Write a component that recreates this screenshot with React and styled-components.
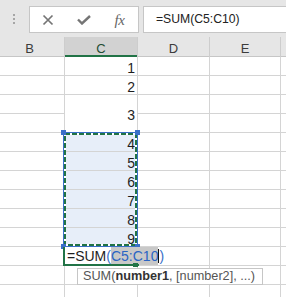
import React from 'react';
import styled, { createGlobalStyle } from 'styled-components';

const GlobalStyle = createGlobalStyle`
  html, body {
    margin: 0;
    padding: 0;
    background: #ffffff;
  }
  body {
    font-family: 'Liberation Sans', Arial, sans-serif;
  }
`;

const SHEET_FONT = `'Liberation Sans', Arial, sans-serif`;
const GREEN = '#217346';
const BLUE = '#3a6fc8';
const COLS = '64px 72px 71px 70px 1fr';

const Page = styled.div`
  width: 286px;
  height: 297px;
  overflow: hidden;
  background: #e6e6e6;
`;

const Toolbar = styled.div`
  height: 37px;
  padding-top: 6px;
  box-sizing: border-box;
  display: flex;
  align-items: flex-start;
`;

const Grip = styled.div`
  margin: 8px 0 0 13px;
  display: flex;
  flex-direction: column;
  gap: 2px;
  span {
    width: 2px;
    height: 2px;
    background: #a6a6a6;
  }
`;

const Box = styled.div`
  height: 27px;
  box-sizing: border-box;
  border: 1px solid #c6c6c6;
  background: #ffffff;
  display: flex;
  align-items: center;
`;

const ButtonsBox = styled(Box)`
  width: 110px;
  margin-left: 14px;
`;

const FormulaBox = styled(Box)`
  flex: 1;
  margin: 0 -10px 0 4px;
  padding-left: 12px;
  font-size: 12.2px;
  line-height: 25px;
  color: #222222;
`;

const IconCell = styled.div`
  width: ${(p) => p.$w}px;
  height: 25px;
  display: flex;
  align-items: center;
  justify-content: center;
`;

const Fx = styled.span`
  font-family: 'Liberation Serif', 'Times New Roman', serif;
  font-style: italic;
  font-size: 15px;
  color: #666666;
  letter-spacing: -0.5px;
  margin-top: 1px;
`;

const HeaderRow = styled.div`
  display: grid;
  grid-template-columns: ${COLS};
  column-gap: 1px;
  background: #cdcdcd;
  height: 20px;
`;

const HeaderCell = styled.div`
  background: ${(p) => (p.$active ? '#d2d2d2' : '#e6e6e6')};
  border-bottom: ${(p) => (p.$active ? `2px solid ${GREEN}` : '1px solid #c6c6c6')};
  color: ${(p) => (p.$active ? '#1f4d33' : '#3c3c3c')};
  font-family: ${SHEET_FONT};
  font-size: 13px;
  line-height: 13px;
  display: flex;
  justify-content: center;
  padding-top: 5px;
  padding-right: ${(p) => p.$shift || 0}px;
  box-sizing: border-box;
`;

const Sheet = styled.div`
  position: relative;
`;

const Grid = styled.div`
  display: grid;
  grid-template-columns: ${COLS};
  grid-auto-rows: 18px;
  gap: 1px;
  background: #d4d4d4;
`;

const Cell = styled.div`
  background: ${(p) => (p.$selected ? '#e7eef9' : '#ffffff')};
  grid-row: ${(p) => (p.$span ? 'span 2' : 'auto')};
  display: flex;
  justify-content: flex-end;
  align-items: ${(p) => (p.$span ? 'center' : 'flex-end')};
  padding-right: 2px;
  padding-top: ${(p) => (p.$span ? 2 : 0)}px;
  font-family: ${SHEET_FONT};
  font-size: 14px;
  line-height: 14px;
  color: #1e1e1e;
`;

const Marquee = styled.svg`
  position: absolute;
  left: 63px;
  top: 75px;
  pointer-events: none;
`;

const Handle = styled.div`
  position: absolute;
  left: ${(p) => p.$x - 2}px;
  top: ${(p) => p.$y - 2}px;
  width: 5px;
  height: 5px;
  background: ${BLUE};
`;

const Editor = styled.div`
  position: absolute;
  left: 65px;
  top: 190px;
  height: 18px;
  padding: 0 3px 0 2px;
  background: #ffffff;
  font-family: ${SHEET_FONT};
  font-size: 14px;
  line-height: 19px;
  color: #1e1e1e;
  white-space: nowrap;
`;

const Ref = styled.span`
  display: inline-block;
  color: ${(p) => (p.$hl ? '#2a64c4' : BLUE)};
  background: ${(p) => (p.$hl ? '#c8c8c8' : 'transparent')};
  height: 18px;
`;

const Caret = styled.span`
  display: inline-block;
  width: 1px;
  height: 14px;
  margin-bottom: -2px;
  background: #111111;
`;

const ActiveCell = styled.div`
  position: absolute;
  left: 63px;
  top: 190px;
  width: 76px;
  height: 19px;
  box-sizing: border-box;
  border-left: 2px solid ${GREEN};
  border-bottom: 2px solid ${GREEN};
`;

const FillHandle = styled.div`
  position: absolute;
  left: 133px;
  top: 206px;
  width: 5px;
  height: 4px;
  background: ${GREEN};
`;

const Tooltip = styled.div`
  position: absolute;
  left: 77px;
  top: 211px;
  width: 186px;
  height: 17px;
  box-sizing: border-box;
  border: 1px solid #c6c6c6;
  background: #ffffff;
  padding-left: 5px;
  font-family: 'Liberation Sans', Arial, sans-serif;
  font-size: 12.7px;
  line-height: 15px;
  color: #555555;
  white-space: nowrap;
  b {
    color: #333333;
  }
`;

const CloseIcon = () => (
  <svg width="12" height="12" viewBox="0 0 12 12">
    <path d="M1.5 1.5 L10.5 10.5 M10.5 1.5 L1.5 10.5" stroke="#757575" strokeWidth="1.7" />
  </svg>
);

const CheckIcon = () => (
  <svg width="14" height="10" viewBox="0 0 14 10">
    <path d="M1 4.5 L5 8.5 L13 1" stroke="#757575" strokeWidth="2.4" fill="none" />
  </svg>
);

const rows = [
  { c: '1' },
  { c: '2' },
  { c: '3', span: true },
  { skip: true },
  { c: '4', sel: true },
  { c: '5', sel: true },
  { c: '6', sel: true },
  { c: '7', sel: true },
  { c: '8', sel: true },
  { c: '9', sel: true },
  {},
  {},
  {},
];

export default function App() {
  return (
    <Page>
      <GlobalStyle />
      <Toolbar>
        <Grip>
          <span />
          <span />
          <span />
        </Grip>
        <ButtonsBox>
          <IconCell $w={36}>
            <CloseIcon />
          </IconCell>
          <IconCell $w={35}>
            <CheckIcon />
          </IconCell>
          <IconCell $w={37}>
            <Fx>fx</Fx>
          </IconCell>
        </ButtonsBox>
        <FormulaBox>=SUM(C5:C10)</FormulaBox>
      </Toolbar>
      <HeaderRow>
        <HeaderCell $shift={5}>B</HeaderCell>
        <HeaderCell $active>C</HeaderCell>
        <HeaderCell>D</HeaderCell>
        <HeaderCell>E</HeaderCell>
        <HeaderCell />
      </HeaderRow>
      <Sheet>
        <Grid>
          {rows.map((r, i) => (
            <React.Fragment key={i}>
              <Cell />
              {!r.skip && (
                <Cell $selected={r.sel} $span={r.span}>
                  {r.c}
                </Cell>
              )}
              <Cell />
              <Cell />
              <Cell />
            </React.Fragment>
          ))}
        </Grid>
        <Marquee width="75" height="115">
          <rect x="0.5" y="0.5" width="74" height="114" fill="none" stroke={BLUE} strokeWidth="1" />
          <rect x="2" y="2" width="71" height="111" fill="none" stroke="#ffffff" strokeWidth="2" />
          <rect x="2" y="2" width="71" height="111" fill="none" stroke={GREEN} strokeWidth="2" strokeDasharray="5 2" />
        </Marquee>
        <Handle $x={63} $y={75} />
        <Handle $x={137} $y={75} />
        <Handle $x={63} $y={189} />
        <Handle $x={137} $y={189} />
        <Editor>
          =SUM<Ref>(</Ref>
          <Ref $hl>C5:C10</Ref>
          <Caret />
          <Ref>)</Ref>
        </Editor>
        <ActiveCell />
        <FillHandle />
        <Tooltip>
          SUM(<b>number1</b>, [number2], ...)
        </Tooltip>
      </Sheet>
    </Page>
  );
}
